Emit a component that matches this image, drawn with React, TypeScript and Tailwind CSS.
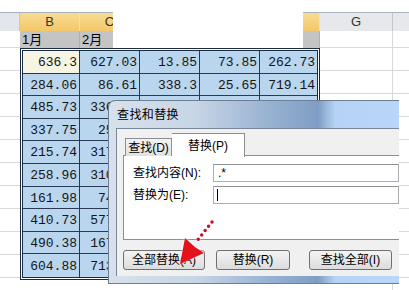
import React from "react";

const CJK = "font-['Liberation_Sans','Noto_Sans_CJK_SC',sans-serif]";

// D–F of rows 3–10 sit under the dialog, so they stay empty
const data = [
  ["636.3", "627.03", "13.85", "73.85", "262.73"],
  ["284.06", "86.61", "338.3", "25.65", "719.14"],
  ["485.73", "336.52", "", "", ""],
  ["337.75", "25.87", "", "", ""],
  ["215.74", "317.26", "", "", ""],
  ["258.96", "310.45", "", "", ""],
  ["161.98", "74.32", "", "", ""],
  ["410.73", "577.18", "", "", ""],
  ["490.38", "167.05", "", "", ""],
  ["604.88", "713.62", "", "", ""],
];

const colW = ["w-[57px]", "w-[60px]", "w-[60px]", "w-[60px]", "w-[57px]"];
const grid = "border-[#d6d9de]";

const Sheet = () => (
  <div className="flex flex-col">
    <div className="h-[12px]" />
    {/* column headers */}
    <div className="flex h-[19px] border-t border-[#a9b3bf]">
      <div className="w-[20px] bg-[#e3e6ea] border-r border-[#c3c7cc]" />
      {["B", "C", "D", "E", "F"].map((c) => (
        <div
          key={c}
          className="w-[60px] flex items-center justify-center bg-gradient-to-b from-[#f9dc92] to-[#f3c867] border-r border-[#f6e1a8] text-[13px] text-[#333] font-['Liberation_Sans',sans-serif]"
        >
          {c}
        </div>
      ))}
      <div className="w-[73px] flex items-center justify-center bg-[#e6e8eb] border-r border-[#c3c7cc] text-[13px] text-[#333] font-['Liberation_Sans',sans-serif]">
        G
      </div>
      <div className="flex-1 bg-[#e6e8eb]" />
    </div>
    {/* row 1 */}
    <div className="flex h-[17px]">
      <div className={`w-[20px] border-b ${grid}`} />
      {["1月", "2月", "", "", ""].map((t, i) => (
        <div
          key={i}
          className={`w-[60px] flex items-end pl-[2px] bg-[#c4c4c4] border-r border-[#b0b0b0] text-[13px] leading-[16px] text-black ${CJK}`}
        >
          {t}
        </div>
      ))}
      <div className={`w-[73px] border-r border-b ${grid}`} />
      <div className={`flex-1 border-b ${grid}`} />
    </div>
    {/* body */}
    <div className="flex">
      <div className="w-[20px] flex flex-col">
        {Array.from({ length: 11 }).map((_, i) => (
          <div key={i} className={`h-[23px] border-b ${grid}`} />
        ))}
      </div>
      <div className="w-[300px] h-[232px] border-[3px] border-double border-[#1c2b44] flex flex-col">
        {data.map((row, r) => (
          <div
            key={r}
            className={`flex h-[22.6px] ${r < 9 ? "border-b border-[#2a3a55]" : ""}`}
          >
            {row.map((v, c) => (
              <div
                key={c}
                className={`${colW[c]} flex items-center justify-end pr-[2px] pt-[2px] ${
                  c < 4 ? "border-r border-[#2a3a55]" : ""
                } ${r === 0 && c === 0 ? "bg-[#f6f4e2]" : "bg-[#bad5ee]"} font-['Liberation_Mono',monospace] text-[13px] text-[#151515]`}
              >
                {v}
              </div>
            ))}
          </div>
        ))}
      </div>
      <div className="w-[73px] flex flex-col">
        {Array.from({ length: 11 }).map((_, i) => (
          <div key={i} className={`h-[23px] border-r border-b ${grid}`} />
        ))}
      </div>
      <div className="flex-1 flex flex-col">
        {Array.from({ length: 11 }).map((_, i) => (
          <div key={i} className={`h-[23px] border-b ${grid}`} />
        ))}
      </div>
    </div>
  </div>
);

const Button = ({ label, w, ml }: { label: string; w: string; ml: string }) => (
  <div
    className={`${w} ${ml} h-[20px] flex items-center justify-center rounded-[3px] border border-[#707070] bg-gradient-to-b from-[#f4f4f4] to-[#dcdcdc] text-[12px] text-black whitespace-nowrap ${CJK}`}
  >
    {label}
  </div>
);

const Dialog = () => (
  <div className="absolute left-[108px] top-[100px] w-[291px] h-[184px] rounded-tl-[7px] border-l border-t border-b border-[#6d7f97] bg-[linear-gradient(to_right,#d8e1eb_0%,#c7d5e5_30%,#98b2d2_55%,#7f9dc4_72%,#b6d3f5_78%,#b9d6f8_100%)] flex flex-col">
    <div className={`h-[27px] flex items-center pl-[8px] text-[12px] tracking-[0.4px] text-black ${CJK}`}>
      查找和替换
    </div>
    <div className="flex-1 ml-[7px] mb-[7px] border-l border-t border-[#7a8799] bg-[#f0f0f0] flex flex-col pt-[4px] pl-[6px]">
      {/* tabs */}
      <div className="flex items-end h-[23px] pl-[2px] relative z-10">
        <div
          className={`w-[47px] h-[18px] flex items-center justify-center border border-b-0 border-[#8c8e94] bg-gradient-to-b from-[#f3f3f3] to-[#e1e1e1] text-[12px] text-black whitespace-nowrap ${CJK}`}
        >
          查找(D)
        </div>
        <div
          className={`w-[73px] h-[24px] -mb-px flex items-center justify-center border border-b-0 border-l-0 border-[#8c8e94] bg-white text-[12px] text-black whitespace-nowrap ${CJK}`}
        >
          替换(P)
        </div>
      </div>
      <div className="h-[85px] -mt-px bg-white border border-r-0 border-[#8c8e94] pt-[8px] pl-[9px] flex flex-col gap-[4px]">
        <div className="flex items-center h-[18px]">
          <div className={`w-[80px] text-[12px] text-black whitespace-nowrap ${CJK}`}>查找内容(N):</div>
          <div className="flex-1 h-[18px] border border-[#abadb3] border-t-[#8e9196] flex items-center pl-[4px] font-['Liberation_Sans',sans-serif] text-[12px] text-black">
            .*
          </div>
        </div>
        <div className="flex items-center h-[18px]">
          <div className={`w-[80px] text-[12px] text-black whitespace-nowrap ${CJK}`}>替换为(E):</div>
          <div className="flex-1 h-[18px] border border-[#abadb3] border-t-[#8e9196] flex items-center pl-[3px]">
            <div className="w-px h-[12px] bg-black" />
          </div>
        </div>
      </div>
      <div className="flex mt-[10px]">
        <Button label="全部替换(A)" w="w-[82px]" ml="ml-0" />
        <Button label="替换(R)" w="w-[74px]" ml="ml-[11px]" />
        <Button label="查找全部(I)" w="w-[83px]" ml="ml-[19px]" />
      </div>
    </div>
  </div>
);

const Arrow = () => (
  <svg
    className="absolute left-[168px] top-[212px] drop-shadow-[0_0_1.5px_#ffffff]"
    width="54"
    height="56"
    viewBox="0 0 54 56"
  >
    <line
      x1="44"
      y1="10"
      x2="28"
      y2="30"
      stroke="#c8102a"
      strokeWidth="3.5"
      strokeLinecap="round"
      strokeDasharray="0 5.5"
    />
    <polygon points="17,26 12,52 36,41 27,35" fill="#e5121d" />
  </svg>
);

export default function App() {
  return (
    <div className="relative w-[409px] h-[290px] overflow-hidden bg-white">
      <Sheet />
      <div className="absolute left-[113px] top-0 w-[190px] h-[48px] bg-white" />
      <Dialog />
      <Arrow />
    </div>
  );
}
